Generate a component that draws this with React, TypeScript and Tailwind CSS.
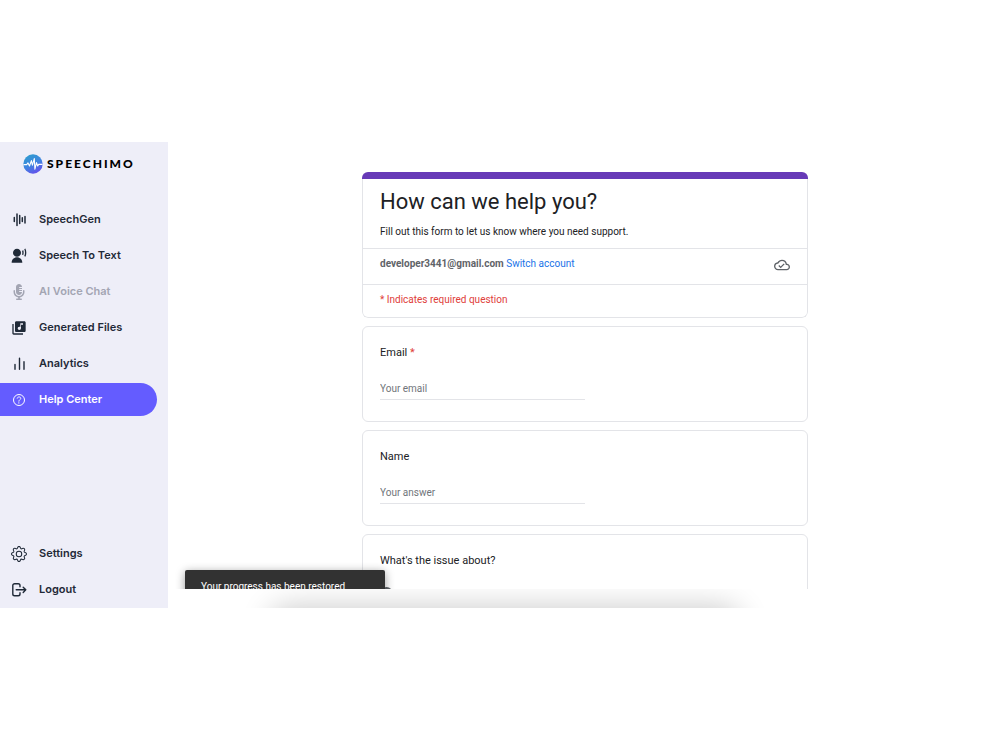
import React, { useState } from 'react';
import clsx from 'clsx';
import { IconType } from 'react-icons';
import { MdLibraryMusic, MdOutlineCloudDone } from 'react-icons/md';
import { RiUserVoiceFill } from 'react-icons/ri';
import { FaMicrophoneLines } from 'react-icons/fa6';
import { BsGear } from 'react-icons/bs';
import { IoHelpCircleOutline } from 'react-icons/io5';

type IconProps = { className?: string };

interface NavItem {
  id: string;
  label: string;
  icon: IconType | React.FC<IconProps>;
  disabled?: boolean;
}

const VoiceBars = ({ className }: IconProps) => (
  <svg viewBox="0 0 16 16" className={className} stroke="currentColor" strokeWidth="1.5" strokeLinecap="round" aria-hidden="true">
    <path d="M3.3 5.6v4M6 2v11.4M8.7 3.6v8M11.3 5.8v3.6M14 4.4v6.6" />
  </svg>
);

const ChartBars = ({ className }: IconProps) => (
  <svg viewBox="0 0 16 16" className={className} stroke="currentColor" strokeWidth="1.4" strokeLinecap="round" aria-hidden="true">
    <path d="M4 8.4v4.8M8.5 2.2v11M13 5.8v7.4" />
  </svg>
);

const LogoutArrow = ({ className }: IconProps) => (
  <svg
    viewBox="0 0 16 16"
    className={className}
    fill="none"
    stroke="currentColor"
    strokeWidth="1.4"
    strokeLinecap="round"
    strokeLinejoin="round"
    aria-hidden="true"
  >
    <path d="M9 4.8V3.6a1.8 1.8 0 0 0-1.8-1.8H3.6a1.8 1.8 0 0 0-1.8 1.8v8.4a1.8 1.8 0 0 0 1.8 1.8h3.6A1.8 1.8 0 0 0 9 12v-1.2M5.2 7.8h9.6M12.2 5.2l2.6 2.6-2.6 2.6" />
  </svg>
);

const Logo = () => (
  <div className="flex items-center gap-1 pl-[23px]">
    <svg viewBox="0 0 20 20" className="w-5 h-5" aria-hidden="true">
      <defs>
        <linearGradient id="logo-fill" x1="0.3" y1="0" x2="0.8" y2="1">
          <stop offset="0" stopColor="#2f9bd0" />
          <stop offset="0.5" stopColor="#4083e0" />
          <stop offset="1" stopColor="#6a48ee" />
        </linearGradient>
      </defs>
      <circle cx="10" cy="10" r="9.7" fill="url(#logo-fill)" />
      <path
        d="M0.5 10.6h3.2l1.3-1.7 1.5 3.1 1.9-5.4 1 4.6L11.3 4.6l0.6 10.6 1.6-6.6 1.2 3.4 1-1.6h3.8"
        fill="none"
        stroke="#fff"
        strokeWidth="1.1"
        strokeLinejoin="round"
      />
    </svg>
    <span className="font-['Lato',sans-serif] font-black text-xs leading-5 tracking-[2px] text-black">SPEECHIMO</span>
  </div>
);

const MAIN_ITEMS: NavItem[] = [
  { id: 'speechgen', label: 'SpeechGen', icon: VoiceBars },
  { id: 'stt', label: 'Speech To Text', icon: RiUserVoiceFill },
  { id: 'voice-chat', label: 'AI Voice Chat', icon: FaMicrophoneLines, disabled: true },
  { id: 'files', label: 'Generated Files', icon: MdLibraryMusic },
  { id: 'analytics', label: 'Analytics', icon: ChartBars },
  { id: 'help', label: 'Help Center', icon: IoHelpCircleOutline },
];

const FOOTER_ITEMS: NavItem[] = [
  { id: 'settings', label: 'Settings', icon: BsGear },
  { id: 'logout', label: 'Logout', icon: LogoutArrow },
];

interface NavListProps {
  items: NavItem[];
  current: string;
  onSelect: (id: string) => void;
}

const NavList = ({ items, current, onSelect }: NavListProps) => (
  <ul className="flex flex-col gap-[3px] pr-[11px]">
    {items.map(({ id, label, icon: Icon, disabled }) => (
      <li key={id}>
        <button
          type="button"
          disabled={disabled}
          onClick={() => onSelect(id)}
          className={clsx(
            'flex items-center gap-3 w-full h-[33px] pl-[11px] rounded-r-full text-[11px] font-semibold text-left',
            current === id ? 'bg-[#645cff] text-white' : disabled ? 'text-[#a3a5b3]' : 'text-[#1f2937]'
          )}
        >
          <Icon className="w-4 h-4 shrink-0" />
          {label}
        </button>
      </li>
    ))}
  </ul>
);

interface QuestionProps {
  id: string;
  label: string;
  placeholder: string;
  type?: string;
  required?: boolean;
}

const Question = ({ id, label, placeholder, type = 'text', required }: QuestionProps) => (
  <div className="border border-[#e3e4e8] rounded-md bg-white px-[17px] pt-[18px] pb-[21px]">
    <label htmlFor={id} className="block text-[11px] leading-4 text-[#202124]">
      {label} {required && <span className="text-[#e0403a]">*</span>}
    </label>
    <input
      id={id}
      type={type}
      required={required}
      placeholder={placeholder}
      className="block w-1/2 mt-5 pb-[3px] text-[10px] leading-4 h-[19px] border-b border-[#e3e4e8] outline-none placeholder:text-[#70757a]"
    />
  </div>
);

export default function App() {
  const [current, setCurrent] = useState('help');

  return (
    <div className="min-h-screen bg-white flex items-center">
      <div className="relative w-full flex overflow-hidden">
        <aside className="w-[168px] shrink-0 bg-[#eeeef8] pt-3 pb-0.5 font-['Inter',sans-serif]">
          <Logo />
          <nav className="mt-[29px]">
            <NavList items={MAIN_ITEMS} current={current} onSelect={setCurrent} />
            <div className="mt-[121px]">
              <NavList items={FOOTER_ITEMS} current={current} onSelect={setCurrent} />
            </div>
          </nav>
        </aside>

        <main className="flex-1 flex flex-col pl-0.5 pb-[19px] font-['Roboto',sans-serif]">
          <div className="relative z-10 grow h-0 overflow-hidden">
            <form className="max-w-[446px] mx-auto pt-[30px] flex flex-col gap-2">
              <div className="rounded-md overflow-hidden">
                <div className="h-[7px] bg-[#673ab7]" />
                <div className="border border-t-0 border-[#e3e4e8] rounded-b-md bg-white">
                  <div className="px-[17px] pt-[7px] pb-2 border-b border-[#e3e4e8]">
                    <h1 className="text-[22px] leading-8 text-[#202124]">How can we help you?</h1>
                    <p className="mt-1.5 text-[10px] leading-4 text-[#202124]">
                      Fill out this form to let us know where you need support.
                    </p>
                  </div>
                  <div className="flex justify-between px-[17px] py-[7px] h-9 border-b border-[#e3e4e8]">
                    <p className="text-[10px] leading-4 text-[#5f6368]">
                      <span className="font-bold">developer3441@gmail.com</span>{' '}
                      <a href="#" className="text-[#1a73e8]">Switch account</a>
                    </p>
                    <MdOutlineCloudDone className="w-4 h-4 mt-px text-[#5f6368]" />
                  </div>
                  <p className="px-[17px] pt-[7px] pb-[9px] text-[10px] leading-4 text-[#e0403a]">
                    * Indicates required question
                  </p>
                </div>
              </div>

              <Question id="email" label="Email" placeholder="Your email" type="email" required />
              <Question id="name" label="Name" placeholder="Your answer" />

              <fieldset className="border border-[#e3e4e8] rounded-md bg-white px-[17px] pt-[18px] pb-6">
                <legend className="float-left w-full mb-[18px] text-[11px] leading-4 text-[#202124]">What's the issue about?</legend>
                <input
                  type="radio"
                  name="issue"
                  aria-label="Issue"
                  className="block clear-both appearance-none w-[13px] h-[13px] rounded-full border-2 border-[#5f6368]"
                />
              </fieldset>
            </form>

            <div
              role="status"
              className="absolute left-[15px] top-[428px] w-[200px] h-9 px-4 py-[9px] rounded-xs bg-[#323232] text-white text-[10px] leading-4 shadow-[0_2px_10px_rgba(0,0,0,0.4)]"
            >
              Your progress has been restored
            </div>
          </div>
        </main>

        <div className="absolute left-[27%] right-[26%] -bottom-10 h-10 rounded-full shadow-[0_0_30px_2px_rgba(0,0,0,0.2)]" />
      </div>
    </div>
  );
}
